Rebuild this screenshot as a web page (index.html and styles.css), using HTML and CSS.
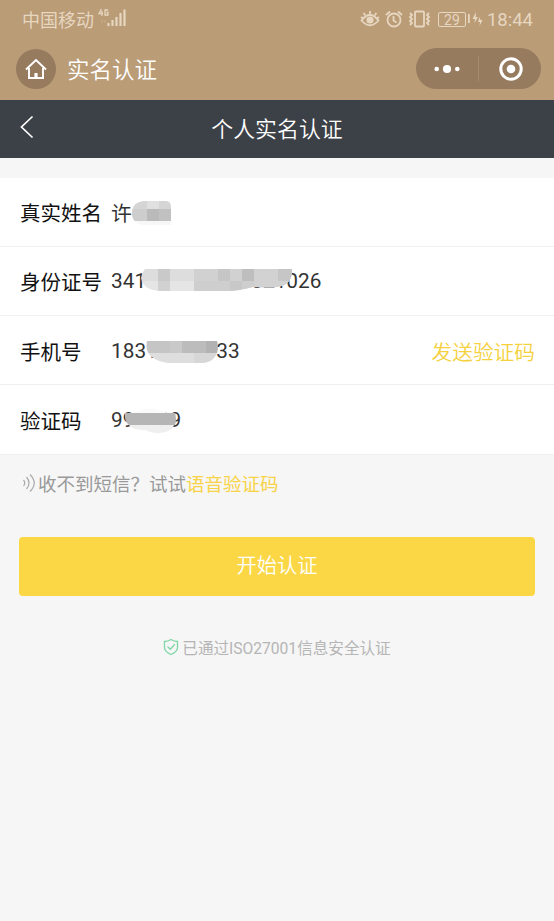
FILE: styles.css
```css
* { box-sizing: border-box; }
body {
  margin: 0;
  min-height: 921px;
  background: #f6f6f6;
  font-family: Roboto, "Noto Sans CJK SC", sans-serif;
  font-size: 20.8px;
  color: #111;
}
h1, h2, p { margin: 0; font-weight: 350; }
svg { display: block; flex: none; }

.top { height: 100px; background: #ba9c77; }
.status {
  display: flex;
  align-items: center;
  height: 38px;
  padding: 0 21px 0 22px;
  color: #e7d6c0;
}
.carrier { padding-top: 3px; font-size: 18px; line-height: 35px; }
.signal { margin: -2px 0 0 4px; }
.indicators { display: flex; align-items: center; margin-left: auto; }
.alarm { margin-left: 5px; }
.vibrate { margin-left: 5px; }
.battery {
  width: 28px;
  height: 15px;
  margin-left: 7px;
  border: 1px solid currentColor;
  border-radius: 2px;
  font-size: 14px;
  line-height: 14px;
  text-align: center;
}
.charge { margin-left: 2px; }
.clock { margin-left: 4px; padding-top: 2px; font-size: 18.5px; line-height: 36px; }

.appbar { display: flex; align-items: center; height: 62px; padding: 0 13px 1px 16px; }
.home {
  display: flex;
  align-items: center;
  justify-content: center;
  width: 40px;
  height: 40px;
  border-radius: 50%;
  background: #967b5f;
}
.app-title { margin-left: 11px; padding-top: 3px; font-size: 22.5px; line-height: 38px; color: #fff; }
.capsule {
  display: flex;
  align-items: center;
  width: 125px;
  height: 41px;
  margin-left: auto;
  padding-left: 18px;
  border-radius: 21px;
  background: #967b5f;
}
.divider { width: 1px; height: 25px; margin-left: 18px; background: #a58b70; }
.target { margin-left: 20px; }

.navbar {
  display: grid;
  grid-template-columns: 34px 1fr 34px;
  align-items: center;
  height: 57.5px;
  padding: 0 0 3.5px;
  background: #3c4047;
}
.back { margin-left: 20px; }
.nav-title { padding-top: 4px; font-size: 21.9px; line-height: 49px; color: #fff; text-align: center; }

.form { margin-top: 20px; background: #fff; }
.row {
  display: flex;
  align-items: center;
  height: 69.25px;
  padding: 1px 19px 0 20px;
  border-bottom: 1px solid #f0f0f0;
}
.label { width: 91px; font-size: 20.5px; }
.value { position: relative; color: #333; }
.mask { position: absolute; }
.mask-name { left: 21px; top: 4px; }
.mask-id { left: 30px; top: 0; }
.mask-phone { left: 35px; top: 2px; }
.mask-code { left: 13px; top: -1px; }
.send { margin-left: auto; font-size: 20.7px; font-weight: 350; color: #f5d13d; }

.hint { display: flex; align-items: center; height: 56px; padding-left: 22px; font-size: 18.5px; font-weight: 400; color: #999; }
.voice { color: #f8d347; }
.submit {
  display: block;
  width: 516px;
  height: 59px;
  margin: 26px 0 0 19px;
  padding: 0 0 4px;
  border: 0;
  border-radius: 4px;
  background: #fbd745;
  color: #fff;
  font: inherit;
  font-size: 20.3px;
  font-weight: 350;
}
.secure {
  display: flex;
  align-items: center;
  justify-content: center;
  gap: 3px;
  margin-top: 40px;
  font-size: 15.6px;
  font-weight: 400;
  color: #b5b5b5;
}
```

FILE: index.html
```html
<!DOCTYPE html>
<html lang="zh-CN">
<head>
<meta charset="utf-8">
<title>实名认证</title>
<link rel="stylesheet" href="styles.css">
</head>
<body>
<header class="top">
  <div class="status">
    <span class="carrier">中国移动</span>
    <svg class="signal" width="30" height="20" viewBox="0 0 30 20" fill="none" stroke="currentColor">
      <path d="M3.5 1 1 5.5h4M4 3v5M10 2H7v5h3V4.5H8.5" stroke-width="1.3"/>
      <path d="M4 12v3M7 12v3" stroke-width=".7" opacity=".5"/>
      <path d="M10.5 15v3M14.5 12v6M18.5 9v9M22.5 5v13M26.5 1.5v16.5" stroke-width="2.2"/>
    </svg>
    <div class="indicators">
      <svg width="20" height="18" viewBox="0 0 20 18" fill="none" stroke="currentColor" stroke-width="1.8">
        <path d="M1.5 10.5Q10-.5 18.5 10.5 10 20 1.5 10.5Z"/><circle cx="10" cy="10" r="2.7" fill="currentColor"/><path d="M10 1v3M3.5 3l2 2.5M16.5 3l-2 2.5M1 7l2 1.5M19 7l-2 1.5"/>
      </svg>
      <svg class="alarm" width="18" height="18" viewBox="0 0 18 18" fill="none" stroke="currentColor" stroke-width="1.8">
        <circle cx="9" cy="10" r="6.5"/><path d="M8.5 6v4.5l3 2M1 5l4-3.5M17 5l-4-3.5"/>
      </svg>
      <svg class="vibrate" width="23" height="18" viewBox="0 0 23 18" fill="none" stroke="currentColor" stroke-width="1.8">
        <rect x="7" y="1.5" width="9" height="15" rx="1"/><path d="M2 3l2 2-2 2 2 2-2 2 2 2-2 2M21 3l-2 2 2 2-2 2 2 2-2 2 2 2"/>
      </svg>
      <span class="battery">29</span>
      <svg class="charge" width="15" height="16" viewBox="0 0 15 16" fill="currentColor">
        <path d="M0 3h1.8v9H0zM8 1 4.5 8H7L6.5 12 10 6H7.7zM11.5 6 10 11h2l-.5 4 3-6h-2z"/>
      </svg>
      <span class="clock">18:44</span>
    </div>
  </div>
  <div class="appbar">
    <span class="home">
      <svg width="24" height="24" viewBox="0 0 24 24" fill="none" stroke="#fff" stroke-width="1.9">
        <path d="M2 12.5 12 3l10 9.5M5 11v10h14V11"/><path d="M12 21v-5" stroke-width="3.2"/>
      </svg>
    </span>
    <h1 class="app-title">实名认证</h1>
    <div class="capsule">
      <svg width="26" height="10" viewBox="0 0 26 10" fill="#fff"><circle cx="2.7" cy="5" r="2.3"/><circle cx="13" cy="5" r="4.1"/><circle cx="23.3" cy="5" r="2.3"/></svg>
      <span class="divider"></span>
      <svg class="target" width="24" height="24" viewBox="0 0 24 24"><circle cx="12" cy="12" r="10.2" fill="none" stroke="#fff" stroke-width="3"/><circle cx="12" cy="12" r="4.3" fill="#fff"/></svg>
    </div>
  </div>
</header>
<nav class="navbar">
  <svg class="back" width="14" height="24" viewBox="0 0 14 24" fill="none" stroke="#fff" stroke-width="1.7"><path d="M12.5 1.5 1.5 12l11 10.5"/></svg>
  <h2 class="nav-title">个人实名认证</h2>
</nav>
<main>
  <section class="form">
    <div class="row">
      <span class="label">真实姓名</span>
      <span class="value">许
        <svg class="mask mask-name" width="41" height="26" viewBox="0 0 41 26">
          <clipPath id="m1"><path d="M12 0h22q5 0 5 6v18H12Q0 23 0 12T12 0Z"/></clipPath>
          <g clip-path="url(#m1)"><path fill="#d5d5d5" d="M0 0h39v8H0z"/><path fill="#e0e0e0" d="M15 0h12v8H15z"/><path fill="#cdcdcd" d="M0 8h15v12H0z"/><path fill="#bababa" d="M15 8h12v12H15z"/><path fill="#c1c1c1" d="M27 8h12v12H27z"/><path fill="#f7f7f7" d="M0 20h39v6H0z"/></g>
        </svg>
      </span>
    </div>
    <div class="row">
      <span class="label">身份证号</span>
      <span class="value">341000000000021026
        <svg class="mask mask-id" width="152" height="23" viewBox="0 0 152 23">
          <clipPath id="m2"><path d="M4 0h147q1 16-15 18-8 1-24 0-15 4-25 4H20Q2 21 0 9Q2 2 4 0Z"/></clipPath>
          <g clip-path="url(#m2)"><path fill="#ddd" d="M0 0h152v23H0z"/><path fill="#c9c9c9" d="M17 0h12v12H17z"/><path fill="#d1d1d1" d="M17 12h12v11H17zM53 0h24v12H53zM89 0h12v12H89z"/><path fill="#e5e5e5" d="M0 12h17v11H0zM29 12h24v11H29z"/><path fill="#c6c6c6" d="M77 0h12v12H77zM137 0h15v12h-15z"/><path fill="#bebebe" d="M101 0h12v12h-12z"/><path fill="#cecece" d="M53 12h36v11H53zM101 12h12v11h-12z"/><path fill="#c8c8c8" d="M89 12h12v11H89z"/><path fill="#d2d2d2" d="M113 0h24v12h-24zM113 12h39v11h-39z"/></g>
        </svg>
      </span>
    </div>
    <div class="row">
      <span class="label">手机号</span>
      <span class="value">18310000033
        <svg class="mask mask-phone" width="73" height="22" viewBox="0 0 73 22">
          <clipPath id="m3"><path d="M1 0h70q3 10-3 17-4 5-13 5H22Q-3 18 1 0Z"/></clipPath>
          <g clip-path="url(#m3)"><path fill="#c5c5c5" d="M0 0h24v12H0z"/><path fill="#c9c9c9" d="M24 0h12v12H24z"/><path fill="#bcbcbc" d="M36 0h24v12H36z"/><path fill="#b2b2b2" d="M60 0h13v12H60z"/><path fill="#dedede" d="M0 12h48v10H0z"/><path fill="#d7d7d7" d="M48 12h25v10H48z"/></g>
        </svg>
      </span>
      <a class="send">发送验证码</a>
    </div>
    <div class="row">
      <span class="label">验证码</span>
      <span class="value">990009
        <svg class="mask mask-code" width="54" height="26" viewBox="0 0 54 26">
          <path fill="#fafafa" d="M8 7Q26-4 45 7z"/><path fill="#efefef" d="M5 18h45q-3 8-18 8-6 0-11-3Q8 23 5 18Z"/><path fill="#b5b5b5" d="M1 6h50q2 7 0 12H5Q0 14 1 6Z"/>
        </svg>
      </span>
    </div>
  </section>
  <p class="hint">
    <svg width="16" height="20" viewBox="0 0 16 20" fill="none" stroke="#aaa" stroke-width="1.2"><path d="M1.5 7q2.5 3 0 6M4.5 4q5 6 0 12M8 1.5q8.5 8.5 0 17"/></svg><span>收不到短信？试试</span><a class="voice">语音验证码</a>
  </p>
  <button class="submit">开始认证</button>
  <p class="secure">
    <svg width="16" height="18" viewBox="0 0 16 18" fill="none" stroke="#7fd6a6" stroke-width="1.3"><path d="M8 1.5q3 2 6.5 2v6q0 4-6.5 7-6.5-3-6.5-7v-6q3.5 0 6.5-2Z"/><path d="m4.5 8.5 2.8 2.7 4.5-5"/></svg><span>已通过ISO27001信息安全认证</span>
  </p>
</main>
</body>
</html>
```
